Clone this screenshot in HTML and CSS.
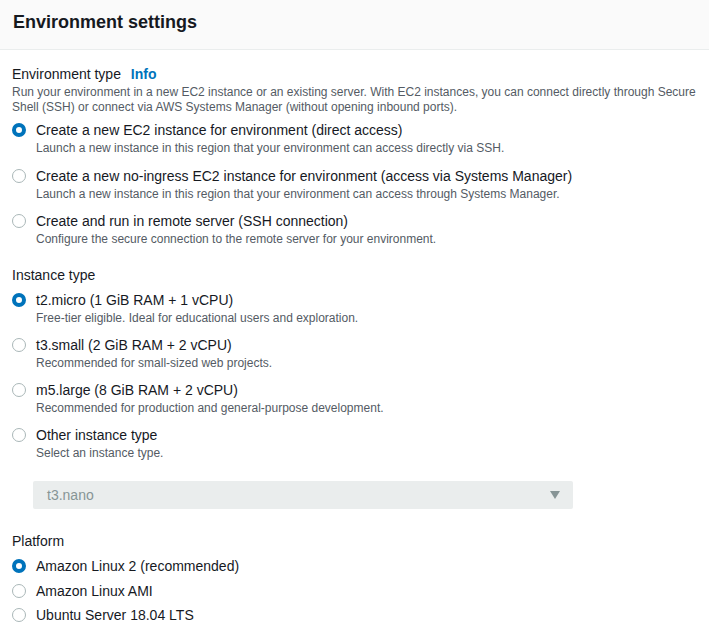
FILE: index.html
```html
<!DOCTYPE html>
<html lang="en">
<head>
<meta charset="utf-8">
<title>Environment settings</title>
<link rel="stylesheet" href="styles.css">
</head>
<body>
<div class="panel">
  <div class="panel-header"><h2>Environment settings</h2></div>
  <div class="panel-body">
    <div class="field first">
      <div class="field-label">Environment type <a class="info" href="#">Info</a></div>
      <div class="field-desc">Run your environment in a new EC2 instance or an existing server. With EC2 instances, you can connect directly through Secure Shell (SSH) or connect via AWS Systems Manager (without opening inbound ports).</div>
      <div class="radio-group">
        <label class="radio"><span class="dot checked"></span><span class="radio-text"><span class="radio-label">Create a new EC2 instance for environment (direct access)</span><span class="radio-desc">Launch a new instance in this region that your environment can access directly via SSH.</span></span></label>
        <label class="radio"><span class="dot"></span><span class="radio-text"><span class="radio-label">Create a new no-ingress EC2 instance for environment (access via Systems Manager)</span><span class="radio-desc">Launch a new instance in this region that your environment can access through Systems Manager.</span></span></label>
        <label class="radio"><span class="dot"></span><span class="radio-text"><span class="radio-label">Create and run in remote server (SSH connection)</span><span class="radio-desc">Configure the secure connection to the remote server for your environment.</span></span></label>
      </div>
    </div>

    <div class="field">
      <div class="field-label">Instance type</div>
      <div class="radio-group tight">
        <label class="radio"><span class="dot checked"></span><span class="radio-text"><span class="radio-label">t2.micro (1 GiB RAM + 1 vCPU)</span><span class="radio-desc">Free-tier eligible. Ideal for educational users and exploration.</span></span></label>
        <label class="radio"><span class="dot"></span><span class="radio-text"><span class="radio-label">t3.small (2 GiB RAM + 2 vCPU)</span><span class="radio-desc">Recommended for small-sized web projects.</span></span></label>
        <label class="radio"><span class="dot"></span><span class="radio-text"><span class="radio-label">m5.large (8 GiB RAM + 2 vCPU)</span><span class="radio-desc">Recommended for production and general-purpose development.</span></span></label>
        <label class="radio"><span class="dot"></span><span class="radio-text"><span class="radio-label">Other instance type</span><span class="radio-desc">Select an instance type.</span></span></label>
      </div>
      <div class="select disabled"><span>t3.nano</span><span class="caret"></span></div>
    </div>

    <div class="field platform">
      <div class="field-label">Platform</div>
      <div class="radio-group compact">
        <label class="radio"><span class="dot checked"></span><span class="radio-text"><span class="radio-label">Amazon Linux 2 (recommended)</span></span></label>
        <label class="radio"><span class="dot"></span><span class="radio-text"><span class="radio-label">Amazon Linux AMI</span></span></label>
        <label class="radio"><span class="dot"></span><span class="radio-text"><span class="radio-label">Ubuntu Server 18.04 LTS</span></span></label>
      </div>
    </div>
  </div>
</div>
</body>
</html>
```

FILE: styles.css
```css
html, body {
  margin: 0;
  padding: 0;
  background: #ffffff;
}
body {
  font-family: "Liberation Sans", Arial, sans-serif;
  color: #16191f;
  font-size: 14px;
}
.panel-header {
  height: 50px;
  background: #fafafa;
  border-bottom: 1px solid #eaeded;
  box-sizing: border-box;
  padding: 0 13px;
  display: flex;
  align-items: center;
}
.panel-header h2 {
  margin: 0;
  font-size: 18px;
  font-weight: 700;
  line-height: 22px;
  color: #16191f;
  position: relative;
  top: -3px;
}
.panel-body {
  padding: 0 12px;
}
.field {
  margin-top: 18px;
}
.field.first {
  margin-top: 14px;
}
.field.platform {
  margin-top: 22px;
}
.field-label {
  font-size: 14px;
  line-height: 20px;
  color: #16191f;
}
.info {
  color: #0073bb;
  font-weight: 700;
  text-decoration: none;
  margin-left: 6px;
}
.field-desc {
  font-size: 12px;
  line-height: 15px;
  color: #545b64;
  margin-top: 1px;
}
.radio-group {
  display: flex;
  flex-direction: column;
  gap: 9.5px;
  margin-top: 5px;
}
.radio-group.tight {
  gap: 9px;
}
.radio-group.compact {
  gap: 4.5px;
}
.radio {
  display: flex;
  align-items: flex-start;
  gap: 10px;
}
.dot {
  flex: none;
  width: 14px;
  height: 14px;
  box-sizing: border-box;
  border-radius: 50%;
  border: 1px solid #aab7b8;
  background: #fff;
  margin-top: 3px;
}
.dot.checked {
  border: 4.5px solid #0073bb;
  background: #fff;
}
.radio-text {
  display: flex;
  flex-direction: column;
}
.radio-label {
  font-size: 14px;
  line-height: 20px;
  color: #16191f;
}
.radio-desc {
  font-size: 12px;
  line-height: 16px;
  color: #545b64;
}
.select {
  margin: 20px 0 0 21px;
  width: 540px;
  height: 28px;
  box-sizing: border-box;
  background: #eaeded;
  border-radius: 2px;
  display: flex;
  align-items: center;
  justify-content: space-between;
  padding: 0 13px 0 14px;
  font-size: 14px;
  color: #879596;
}
.caret {
  width: 0;
  height: 0;
  border-left: 5px solid transparent;
  border-right: 5px solid transparent;
  border-top: 8px solid #879596;
}
```
